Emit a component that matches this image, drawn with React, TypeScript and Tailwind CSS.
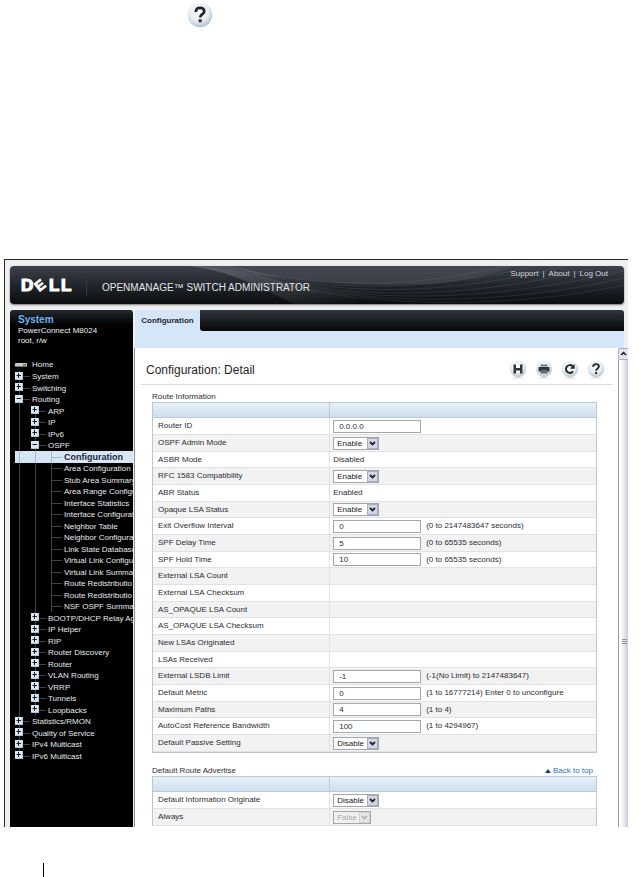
import { useState } from "react"
import type { ReactNode } from "react"

type TreeItem = {
  label: string
  level: number
  state?: "open" | "closed"
  selected?: boolean
}

const treeItems: TreeItem[] = [
  { label: "System", level: 0, state: "closed" },
  { label: "Switching", level: 0, state: "closed" },
  { label: "Routing", level: 0, state: "open" },
  { label: "ARP", level: 1, state: "closed" },
  { label: "IP", level: 1, state: "closed" },
  { label: "IPv6", level: 1, state: "closed" },
  { label: "OSPF", level: 1, state: "open" },
  { label: "Configuration", level: 2, selected: true },
  { label: "Area Configuration", level: 2 },
  { label: "Stub Area Summary", level: 2 },
  { label: "Area Range Configu", level: 2 },
  { label: "Interface Statistics", level: 2 },
  { label: "Interface Configurat", level: 2 },
  { label: "Neighbor Table", level: 2 },
  { label: "Neighbor Configura", level: 2 },
  { label: "Link State Database", level: 2 },
  { label: "Virtual Link Configu", level: 2 },
  { label: "Virtual Link Summa", level: 2 },
  { label: "Route Redistributio", level: 2 },
  { label: "Route Redistributio", level: 2 },
  { label: "NSF OSPF Summa", level: 2 },
  { label: "BOOTP/DHCP Relay Age", level: 1, state: "closed" },
  { label: "IP Helper", level: 1, state: "closed" },
  { label: "RIP", level: 1, state: "closed" },
  { label: "Router Discovery", level: 1, state: "closed" },
  { label: "Router", level: 1, state: "closed" },
  { label: "VLAN Routing", level: 1, state: "closed" },
  { label: "VRRP", level: 1, state: "closed" },
  { label: "Tunnels", level: 1, state: "closed" },
  { label: "Loopbacks", level: 1, state: "closed" },
  { label: "Statistics/RMON", level: 0, state: "closed" },
  { label: "Quality of Service", level: 0, state: "closed" },
  { label: "IPv4 Multicast", level: 0, state: "closed" },
  { label: "IPv6 Multicast", level: 0, state: "closed" },
]

type Row = {
  label: string
  kind: "input" | "select" | "text"
  value?: string
  hint?: string
  disabled?: boolean
}

const routeRows: Row[] = [
  { label: "Router ID", kind: "input", value: "0.0.0.0" },
  { label: "OSPF Admin Mode", kind: "select", value: "Enable" },
  { label: "ASBR Mode", kind: "text", value: "Disabled" },
  { label: "RFC 1583 Compatibility", kind: "select", value: "Enable" },
  { label: "ABR Status", kind: "text", value: "Enabled" },
  { label: "Opaque LSA Status", kind: "select", value: "Enable" },
  { label: "Exit Overflow Interval", kind: "input", value: "0", hint: "(0 to 2147483647 seconds)" },
  { label: "SPF Delay Time", kind: "input", value: "5", hint: "(0 to 65535 seconds)" },
  { label: "SPF Hold Time", kind: "input", value: "10", hint: "(0 to 65535 seconds)" },
  { label: "External LSA Count", kind: "text" },
  { label: "External LSA Checksum", kind: "text" },
  { label: "AS_OPAQUE LSA Count", kind: "text" },
  { label: "AS_OPAQUE LSA Checksum", kind: "text" },
  { label: "New LSAs Originated", kind: "text" },
  { label: "LSAs Received", kind: "text" },
  { label: "External LSDB Limit", kind: "input", value: "-1", hint: "(-1(No Limit) to 2147483647)" },
  { label: "Default Metric", kind: "input", value: "0", hint: "(1 to 16777214) Enter 0 to unconfigure" },
  { label: "Maximum Paths", kind: "input", value: "4", hint: "(1 to 4)" },
  { label: "AutoCost Reference Bandwidth", kind: "input", value: "100", hint: "(1 to 4294967)" },
  { label: "Default Passive Setting", kind: "select", value: "Disable" },
]

const advertiseRows: Row[] = [
  { label: "Default Information Originate", kind: "select", value: "Disable" },
  { label: "Always", kind: "select", value: "False", disabled: true },
]

function Expander({ state }: { state: "open" | "closed" }) {
  return (
    <svg viewBox="0 0 8 8" className="size-2 shrink-0" aria-hidden="true">
      <rect width="8" height="8" fill="#dbe8f1" />
      <path d="M0 7.5H8M7.5 0V8" stroke="#b4c4d0" />
      <path d={state === "closed" ? "M1.5 3.5H6M3.5 1V6" : "M1.5 3.5H6"} stroke="#10202c" />
    </svg>
  )
}

function TreeRow({ item, last }: { item: TreeItem; last: boolean }) {
  const line = item.selected ? "border-[#a9b9ca]" : "border-[#3f4245]"
  const guides = Array.from({ length: item.level })

  return (
    <li className={`flex items-center odd:h-[11px] even:h-3 ${item.selected ? "bg-[#d6e6f7]" : ""}`}>
      {guides.map((_, i) => (
        <span key={i} className="flex w-4 shrink-0 self-stretch pl-1">
          <span className={`border-l ${line}`} />
        </span>
      ))}
      {item.state ? (
        <span className="flex w-4 shrink-0 items-center self-stretch">
          <span className="flex flex-col self-stretch">
            <span className={`ml-1 h-px border-l ${line}`} />
            <Expander state={item.state} />
            {!last && <span className={`ml-1 flex-1 border-l ${line}`} />}
          </span>
          <span className={`w-[7px] border-t ${line}`} />
        </span>
      ) : (
        <span className="flex w-4 shrink-0 items-center self-stretch pl-1">
          <span className={`self-stretch border-l ${line}`} />
          <span className={`w-2.5 border-t ${line}`} />
        </span>
      )}
      <a
        href="#"
        className={
          item.selected
            ? "ml-px text-[9px] leading-[11px] font-bold text-[#1b2638]"
            : "ml-px text-[8px] leading-[11px] text-[#e6eaed]"
        }
      >
        {item.label}
      </a>
    </li>
  )
}

function Select({ id, value, disabled }: { id: string; value: string; disabled?: boolean }) {
  return (
    <span className={`relative flex ${disabled ? "w-[38px]" : "w-[46px]"}`}>
      <select
        id={id}
        disabled={disabled}
        defaultValue={value}
        className="h-[13px] w-full appearance-none border border-[#a3a6aa] bg-white pl-[3px] text-[8px] leading-[11px] text-[#222] disabled:bg-[#efefef] disabled:text-[#a9a9a9] disabled:opacity-100"
      >
        {disabled ? (
          <>
            <option>False</option>
            <option>True</option>
          </>
        ) : (
          <>
            <option>Enable</option>
            <option>Disable</option>
          </>
        )}
      </select>
      <svg viewBox="0 0 11 11" className="pointer-events-none absolute top-px right-px h-[11px] w-[11px]" aria-hidden="true">
        <rect x="0.5" y="0.5" width="10" height="10" fill={disabled ? "#e6e6e4" : "#d3d7e3"} stroke={disabled ? "#d2d2d0" : "#a9afc0"} />
        <path d="M3 4L5.5 6.5L8 4" fill="none" stroke={disabled ? "#b5b5b0" : "#20242e"} strokeWidth="1.8" />
      </svg>
    </span>
  )
}

function SettingsTable({ name, rows }: { name: string; rows: Row[] }) {
  const [values, setValues] = useState<Record<string, string>>({})

  return (
    <table className="w-full table-fixed border-separate border-spacing-0 border-x border-[#bfc5ca] text-[8px] leading-[10px] text-[#2c2c34]">
      <thead>
        <tr className="h-4 bg-linear-to-b from-[#e9f2f9] to-[#cbdded]">
          <td className="w-2/5 border-t border-r border-b border-[#b9cad9]" />
          <td className="border-t border-b border-[#b9cad9]" />
        </tr>
      </thead>
      <tbody>
        {rows.map((row, i) => {
          const id = `${name}-${i}`
          return (
            <tr key={id} className="h-[17px] even:bg-[#f2f2f2] nth-[3n]:h-4">
              <td className="border-r border-b border-[#e0e2e4] py-0 pl-[5px]">
                {row.kind === "text" ? row.label : <label htmlFor={id}>{row.label}</label>}
              </td>
              <td className="border-b border-[#e0e2e4] py-0 pl-[3px]">
                <div className="flex items-center gap-[5px]">
                  {row.kind === "input" && (
                    <input
                      id={id}
                      type="text"
                      value={values[id] ?? row.value}
                      onChange={(e) => setValues((prev) => ({ ...prev, [id]: e.target.value }))}
                      className="h-[13px] w-[88px] border border-[#a3a6aa] bg-white pl-[5px] leading-[11px]"
                    />
                  )}
                  {row.kind === "select" && <Select id={id} value={row.value ?? ""} disabled={row.disabled} />}
                  {row.kind === "text" && <span>{row.value}</span>}
                  {row.hint && <span>{row.hint}</span>}
                </div>
              </td>
            </tr>
          )
        })}
      </tbody>
    </table>
  )
}

function RoundIcon({ id, children }: { id: string; children: ReactNode }) {
  return (
    <svg viewBox="0 0 18 20" className="h-5 w-[18px]" aria-hidden="true">
      <defs>
        <radialGradient id={id} cx="45%" cy="35%" r="65%">
          <stop offset="0" stopColor="#ffffff" />
          <stop offset="0.6" stopColor="#e8eef2" />
          <stop offset="1" stopColor="#b4c3cd" />
        </radialGradient>
      </defs>
      <ellipse cx="9" cy="18" rx="6" ry="1" fill="#e6e8ea" />
      <circle cx="9" cy="9" r="8.2" fill={`url(#${id})`} />
      {children}
    </svg>
  )
}

function QuestionMark() {
  return (
    <g fill="none" stroke="#22282e">
      <path d="M6.1 6.9C6.2 4.9 7.4 4.1 9 4.1C10.8 4.1 11.9 5.1 11.9 6.5C11.9 8.4 9.1 8.5 9.1 10.8" strokeWidth="1.9" />
      <path d="M9.1 12V14" strokeWidth="2.1" />
    </g>
  )
}

function HeaderWaves() {
  return (
    <svg viewBox="0 0 614 38" preserveAspectRatio="none" className="absolute inset-0 h-full w-full" aria-hidden="true">
      <defs>
        <linearGradient id="wave" x1="0" y1="0" x2="1" y2="0.6">
          <stop offset="0" stopColor="#6c7178" stopOpacity="0.8" />
          <stop offset="0.5" stopColor="#5b6068" stopOpacity="0.4" />
          <stop offset="1" stopColor="#5b6068" stopOpacity="0" />
        </linearGradient>
      </defs>
      <path d="M180 0C225 6 250 22 285 38H400C340 34 270 18 220 0Z" fill="url(#wave)" />
      <path d="M190 0C280 14 420 34 505 0Z" fill="#4a4e58" fillOpacity="0.6" />
      <g fill="none" stroke="#7b8087" strokeOpacity="0.35" strokeWidth="0.6">
        <path d="M220 0C300 22 400 24 495 0" />
        <path d="M225 1C310 27 420 26 525 0" />
        <path d="M230 2C320 32 440 30 555 0" />
        <path d="M235 4C330 37 460 33 585 2" />
        <path d="M242 7C340 40 480 36 614 5" />
        <path d="M252 11C350 42 500 39 614 12" />
        <path d="M265 16C360 43 510 42 614 19" />
      </g>
    </svg>
  )
}

function DellLogo() {
  return (
    <svg viewBox="0 0 54 20" className="h-5 w-[54px] shrink-0" role="img" aria-label="Dell">
      <g
        fill="#fff"
        stroke="#fff"
        strokeWidth="1.2"
        fontFamily="'Liberation Sans', Arial, sans-serif"
        fontWeight="700"
        fontSize="17"
      >
        <text x="1" y="15">D</text>
        <text x="-5" y="5" fontSize="14" strokeWidth="0.8" transform="translate(20 9) rotate(-38)">E</text>
        <text x="29" y="15">L</text>
        <text x="41" y="15">L</text>
      </g>
    </svg>
  )
}

export default function App() {
  return (
    <div className="min-h-screen bg-white font-['Liberation_Sans',Arial,sans-serif]">
      <div className="flex h-[259px] items-start pt-[2px] pl-[187px]">
        <svg viewBox="0 0 18 18" className="size-[26px]" role="img" aria-label="Help">
          <circle cx="9" cy="9" r="8.5" fill="url(#help)" />
          <QuestionMark />
        </svg>
      </div>

      <div className="mr-[13px] ml-1 border-t border-l border-[#2e2e2e] bg-[#efefef]">
        <header className="relative mt-[6px] mr-1 ml-[5px] flex h-[38px] overflow-hidden rounded-[4px] bg-linear-to-b from-[#3c414b] to-[#0b0d0f] shadow-[0_1px_2px_#777]">
          <HeaderWaves />
          <div className="relative flex flex-1 items-center pt-px pl-[10px]">
            <DellLogo />
            <span className="ml-3 h-5 border-l border-[#33383e]" />
            <h1 className="ml-[15px] pt-[5px] text-[10px] leading-3 whitespace-nowrap text-[#e4e6e8]">
              OPENMANAGE™ SWITCH ADMINISTRATOR
            </h1>
            <nav className="mt-px mr-4 ml-auto flex gap-1 self-start text-[8px] leading-3 whitespace-nowrap text-[#d3d6d9]">
              <a href="#">Support</a>
              <span>|</span>
              <a href="#">About</a>
              <span>|</span>
              <a href="#">Log Out</a>
            </nav>
          </div>
        </header>

        <div className="mt-[6px] mr-1 ml-[5px] flex gap-[2px]">
          <div className="h-[38px] w-[123px] shrink-0 rounded-t-[3px] bg-linear-to-b from-[#262b30] to-black to-60% pt-1 pl-2 text-[8px] leading-[10px] text-[#eceff1]">
            <div className="text-[10px] leading-3 font-bold text-[#6fb1ec]">System</div>
            <div>PowerConnect M8024</div>
            <div>root, r/w</div>
          </div>
          <div className="flex-1 rounded-t-[3px] bg-[#d5e6f8]">
            <div className="flex h-[21px]">
              <button type="button" className="w-[65px] rounded-t-[3px] text-[8px] font-bold text-[#1c2733]">
                Configuration
              </button>
              <div className="flex-1 rounded-tr-[3px] rounded-bl-[3px] bg-linear-to-b from-[#30363d] to-[#08090a]" />
            </div>
          </div>
        </div>

        <div className="flex pl-[5px]">
          <nav className="w-[123px] shrink-0 overflow-hidden bg-black pt-[11px] pl-[5px] whitespace-nowrap">
            <div className="flex h-3 items-center">
              <svg viewBox="0 0 12 5" className="h-[5px] w-3" aria-hidden="true">
                <rect width="12" height="4" rx="1" fill="#c9cdd0" />
                <rect y="3" width="12" height="1" fill="#777" />
                <rect x="8" y="1" width="3" height="2" fill="#39a845" />
              </svg>
              <a href="#" className="ml-[5px] text-[8px] leading-3 text-[#e6eaed]">
                Home
              </a>
            </div>
            <ul>
              {treeItems.map((item, i) => (
                <TreeRow key={i} item={item} last={i === treeItems.length - 1} />
              ))}
            </ul>
          </nav>

          <div className="w-[2px] shrink-0 border-r border-[#8f9298]" />

          <main className="min-w-0 flex-1 bg-white pr-[5px] pb-px pl-[6px]">
            <div className="flex h-[37px] items-center justify-between border-b border-[#dcdcdf] pt-2 pr-2 pl-[5px]">
              <h2 className="text-[12px] leading-4 text-[#1f1f24]">Configuration: Detail</h2>
              <div className="flex gap-2">
                <button type="button" aria-label="Save">
                  <RoundIcon id="save">
                    <path d="M4.5 4.5H7V8H11V4.5H13.5V13.5H11V10.5H7V13.5H4.5Z" fill="#2f363d" />
                    <path d="M8 4.5H10V7H8Z" fill="#fff" />
                  </RoundIcon>
                </button>
                <button type="button" aria-label="Print">
                  <RoundIcon id="print">
                    <path d="M5.5 4.5H12.5V6.5H5.5Z" fill="#69727a" />
                    <path d="M3.5 7H14.5V11.5H3.5Z" fill="#2f363d" />
                    <path d="M5.5 10.5H12.5V13.5H5.5Z" fill="#4d565e" />
                    <path d="M6 10.5H12M6 12.2H12" stroke="#9aa4ab" strokeWidth="0.5" />
                  </RoundIcon>
                </button>
                <button type="button" aria-label="Refresh">
                  <RoundIcon id="refresh">
                    <path d="M12 11.4A3.9 3.9 0 1 1 11.6 6.2" fill="none" stroke="#22282e" strokeWidth="2" />
                    <path d="M13.6 4V8.7H8.9Z" fill="#22282e" />
                  </RoundIcon>
                </button>
                <button type="button" aria-label="Help">
                  <RoundIcon id="help">
                    <QuestionMark />
                  </RoundIcon>
                </button>
              </div>
            </div>

            <div className="pr-4 pl-[11px]">
              <h3 className="pt-[7px] text-[8px] leading-[10px] text-[#2c2c34]">Route Information</h3>
              <SettingsTable name="route" rows={routeRows} />
              <div className="flex justify-between border-t border-[#bfc5ca] pt-[13px] pr-1 text-[8px] leading-[10px]">
                <h3 className="text-[#2c2c34]">Default Route Advertise</h3>
                <a href="#" className="flex items-center gap-[2px] text-[#2f6fc4]">
                  <svg viewBox="0 0 6 4" className="h-1 w-[6px]" aria-hidden="true">
                    <path d="M0 4L3 0L6 4Z" fill="#0d3f86" />
                  </svg>
                  Back to top
                </a>
              </div>
              <SettingsTable name="advertise" rows={advertiseRows} />
            </div>
          </main>

          <div className="flex w-[10px] shrink-0 flex-col overflow-hidden bg-[#f4f4f8]" aria-hidden="true">
            <svg viewBox="0 0 10 12" className="h-3 w-[10px]">
              <path d="M10 0.5H2Q0.5 0.5 0.5 2V10Q0.5 11.5 2 11.5H10" fill="#e4e5ee" stroke="#a9abb8" />
              <path d="M3.2 7L5.6 4.6L8 7" fill="none" stroke="#1d1f27" strokeWidth="1.6" />
            </svg>
            <div className="flex flex-1 items-center justify-end border-l border-[#9a9ba3] bg-linear-to-r from-white from-20% to-[#c9cadd] pt-24">
              <svg viewBox="0 0 6 8" className="h-2 w-[6px]">
                <path d="M0 1.5H5M0 3.5H5M0 5.5H5" stroke="#8f91a8" />
              </svg>
            </div>
          </div>
        </div>
      </div>

      <div className="mt-9 ml-[43px] h-[14px] border-l border-black" />
    </div>
  )
}
